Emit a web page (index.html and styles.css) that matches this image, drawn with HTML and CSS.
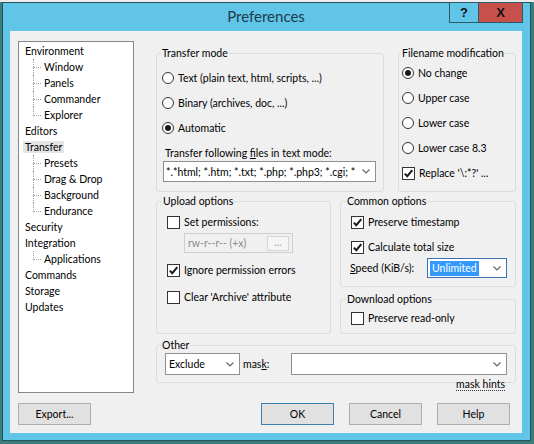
FILE: index.html
```html
<!DOCTYPE html>
<html lang="en">
<head>
    <meta charset="UTF-8">
    <meta name="viewport" content="width=device-width, initial-scale=1.0">
    <title>Preferences</title>
    <link rel="stylesheet" href="styles.css">
</head>
<body>
    <div class="window">
        <div class="titlebar">Preferences</div>
        <div class="caption-buttons">
            <span class="cap-btn cap-help">?</span>
            <span class="cap-btn cap-close">X</span>
        </div>
        <div class="client">
            <div class="main">
                <ul class="tree">
                    <li><span class="node">Environment</span>
                        <ul>
                            <li><span class="node">Window</span></li>
                            <li><span class="node">Panels</span></li>
                            <li><span class="node">Commander</span></li>
                            <li><span class="node">Explorer</span></li>
                        </ul>
                    </li>
                    <li><span class="node">Editors</span></li>
                    <li><span class="node selected">Transfer</span>
                        <ul>
                            <li><span class="node">Presets</span></li>
                            <li><span class="node">Drag &amp; Drop</span></li>
                            <li><span class="node">Background</span></li>
                            <li><span class="node">Endurance</span></li>
                        </ul>
                    </li>
                    <li><span class="node">Security</span></li>
                    <li><span class="node">Integration</span>
                        <ul>
                            <li><span class="node">Applications</span></li>
                        </ul>
                    </li>
                    <li><span class="node">Commands</span></li>
                    <li><span class="node">Storage</span></li>
                    <li><span class="node">Updates</span></li>
                </ul>

                <div class="panel">
                    <div class="row-top">
                        <fieldset class="group transfer-mode">
                            <legend>Transfer mode</legend>
                            <div class="opt"><span class="radio"></span>Text (plain text, html, scripts, ...)</div>
                            <div class="opt"><span class="radio"></span>Binary (archives, doc, ...)</div>
                            <div class="opt"><span class="radio on"></span>Automatic</div>
                            <div class="field-label">Transfer following <u>f</u>iles in text mode:</div>
                            <div class="combo text-masks">
                                <span class="combo-text">*.*html; *.htm; *.txt; *.php; *.php3; *.cgi; *</span>
                                <svg class="chevron" width="8" height="5" viewBox="0 0 8 5"><polyline points="0.5,0.5 4,4 7.5,0.5"/></svg>
                            </div>
                        </fieldset>
                        <fieldset class="group filename">
                            <legend>Filename modification</legend>
                            <div class="opt"><span class="radio on"></span>No change</div>
                            <div class="opt"><span class="radio"></span>Upper case</div>
                            <div class="opt"><span class="radio"></span>Lower case</div>
                            <div class="opt"><span class="radio"></span>Lower case 8.3</div>
                            <div class="opt"><span class="check"><svg viewBox="0 0 11 11"><polyline points="1.8,5.6 4.3,8.2 9.3,2.2"/></svg></span>Replace '\:*?' ...</div>
                        </fieldset>
                    </div>

                    <div class="row-mid">
                        <fieldset class="group upload">
                            <legend>Upload options</legend>
                            <div class="opt"><span class="check off"></span>Set permissions:</div>
                            <div class="perm">
                                <span>rw-r--r-- (+x)</span>
                                <span class="perm-btn">...</span>
                            </div>
                            <div class="opt ignore"><span class="check"><svg viewBox="0 0 11 11"><polyline points="1.8,5.6 4.3,8.2 9.3,2.2"/></svg></span>Ignore permission errors</div>
                            <div class="opt archive"><span class="check off"></span>Clear 'Archive' attribute</div>
                        </fieldset>
                        <div class="stack">
                            <fieldset class="group common">
                                <legend>Common options</legend>
                                <div class="opt"><span class="check"><svg viewBox="0 0 11 11"><polyline points="1.8,5.6 4.3,8.2 9.3,2.2"/></svg></span>Preserve timestamp</div>
                                <div class="opt"><span class="check"><svg viewBox="0 0 11 11"><polyline points="1.8,5.6 4.3,8.2 9.3,2.2"/></svg></span>Calculate total size</div>
                                <div class="speed-row">
                                    <span><u>S</u>peed (KiB/s):</span>
                                    <div class="combo speed">
                                        <span class="combo-text"><span class="sel-text">Unlimited</span></span>
                                        <svg class="chevron" width="8" height="5" viewBox="0 0 8 5"><polyline points="0.5,0.5 4,4 7.5,0.5"/></svg>
                                    </div>
                                </div>
                            </fieldset>
                            <fieldset class="group download">
                                <legend>Download options</legend>
                                <div class="opt"><span class="check off"></span>Preserve read-only</div>
                            </fieldset>
                        </div>
                    </div>

                    <fieldset class="group other">
                        <legend>Other</legend>
                        <div class="other-row">
                            <div class="combo exclude">
                                <span class="combo-text">Exclude</span>
                                <svg class="chevron" width="8" height="5" viewBox="0 0 8 5"><polyline points="0.5,0.5 4,4 7.5,0.5"/></svg>
                            </div>
                            <span class="mask-label">mas<u>k</u>:</span>
                            <div class="combo mask">
                                <span class="combo-text"></span>
                                <svg class="chevron" width="8" height="5" viewBox="0 0 8 5"><polyline points="0.5,0.5 4,4 7.5,0.5"/></svg>
                            </div>
                        </div>
                    </fieldset>
                    <div class="hints"><span>mask hints</span></div>
                </div>
            </div>

            <div class="buttons">
                <button class="btn">Export...</button>
                <button class="btn btn-ok">OK</button>
                <button class="btn">Cancel</button>
                <button class="btn">Help</button>
            </div>
        </div>
    </div>
</body>
</html>
```

FILE: styles.css
```css
* {
    box-sizing: border-box;
}
body {
    margin: 0;
    background: #3b7d7b linear-gradient(#ececec, #ececec) top / 100% 2px no-repeat;
    font-family: Lato, "Liberation Sans", sans-serif;
    font-size: 10.5px;
    color: #000;
}

/* window frame */
.window {
    position: relative;
    width: 529px;
    height: 439px;
    margin: 2px 0 0 2px;
    padding: 0 8px 7px 7px;
    background: #61c5e7;
    border: 1px solid #24525e;
}
.titlebar {
    height: 28px;
    line-height: 27px;
    text-align: center;
    font-size: 15px;
    color: #1d3b4d;
}
.caption-buttons {
    position: absolute;
    top: -1px;
    right: 7px;
    display: flex;
}
.cap-btn {
    height: 21px;
    display: flex;
    align-items: center;
    justify-content: center;
    border: 1px solid #2b5a69;
    font: bold 13px "Liberation Sans", sans-serif;
    color: #111;
}
.cap-help {
    width: 29px;
    border-right: none;
}
.cap-close {
    width: 45px;
    background: #c7504b;
}

.client {
    height: 402px;
    background: #f0f0f0;
    padding: 10px 6px 8px 8px;
    display: flex;
    flex-direction: column;
}
.main {
    display: flex;
    gap: 22px;
    height: 352px;
}

/* tree */
.tree {
    width: 116px;
    margin: 0;
    padding: 1px 0 0 4px;
    list-style: none;
    background: #fff;
    border: 1px solid #828790;
}
.tree ul {
    list-style: none;
    margin: 0;
    padding-left: 19px;
}
.tree li {
    position: relative;
}
.node {
    display: block;
    width: max-content;
    height: 16px;
    line-height: 16px;
    padding: 0 2px;
}
.node.selected {
    background: linear-gradient(transparent 2px, #e5e5e5 2px, #e5e5e5 14px, transparent 14px);
}
.tree ul li::before {
    content: '';
    position: absolute;
    left: -9px;
    top: 0;
    height: 16px;
    border-left: 1px dotted #a0a0a0;
}
.tree ul li:last-child::before {
    height: 9px;
}
.tree ul li::after {
    content: '';
    position: absolute;
    left: -9px;
    top: 8px;
    width: 8px;
    border-top: 1px dotted #a0a0a0;
}

/* options panel */
.panel {
    width: 360px;
    margin-top: 6px;
    display: flex;
    flex-direction: column;
}
.row-top {
    display: grid;
    grid-template-columns: 228px 118px;
    column-gap: 14px;
}
.row-mid {
    display: grid;
    grid-template-columns: 175px 176px;
    column-gap: 9px;
    margin-top: 3px;
}
.stack {
    display: flex;
    flex-direction: column;
    gap: 6px;
}
.group {
    margin: 0;
    min-width: 0;
    border: 1px solid #dcdcdc;
    border-radius: 3px;
}
.group legend {
    padding: 0 1px;
    line-height: 13px;
}
.transfer-mode {
    padding: 10px 7px 9px 5px;
}
.transfer-mode legend,
.filename legend {
    margin-left: -1px;
}
.filename {
    padding: 5px 4px 9px 3px;
}
.upload {
    padding: 6px 7px 0 10px;
}
.upload legend,
.common legend,
.download legend {
    margin-left: -5px;
}
.common {
    padding: 6px 8px 8px 10px;
}
.download {
    padding: 4px 8px 7px 10px;
}
.other {
    margin-top: 5px;
    padding: 1px 8px 7px 8px;
}
.other legend {
    margin-left: -4px;
}

.opt {
    display: flex;
    align-items: center;
    height: 16px;
    white-space: nowrap;
}
.opt + .opt,
.field-label {
    margin-top: 9px;
}
.field-label {
    height: 16px;
    line-height: 16px;
    padding-left: 3px;
}
.upload .ignore {
    margin-top: 9px;
}
.upload .archive {
    margin-top: 11px;
}

.radio {
    width: 12px;
    height: 12px;
    margin-right: 4px;
    border: 1px solid #333;
    border-radius: 50%;
    background: #fff;
    display: flex;
    align-items: center;
    justify-content: center;
}
.radio.on::after {
    content: '';
    width: 6px;
    height: 6px;
    border-radius: 50%;
    background: #1a1a1a;
}
.check {
    width: 13px;
    height: 13px;
    margin-right: 4px;
    border: 1px solid #333;
    background: #fff;
    display: flex;
}
.check svg {
    width: 11px;
    height: 11px;
}
.check polyline {
    fill: none;
    stroke: #1a1a1a;
    stroke-width: 2;
}

/* combo boxes */
.combo {
    display: flex;
    align-items: center;
    background: #fff;
    border: 1px solid #8f8f8f;
    padding: 0 5px 0 3px;
}
.combo-text {
    flex: 1;
    white-space: nowrap;
    overflow: hidden;
}
.chevron {
    flex: none;
    margin-left: 4px;
}
.chevron polyline {
    fill: none;
    stroke: #666;
    stroke-width: 1.2;
}
.text-masks {
    height: 21px;
    margin-left: 1px;
    padding-left: 2px;
}
.speed-row {
    display: flex;
    align-items: center;
    height: 20px;
    margin-top: 3px;
    margin-left: -1px;
}
.speed {
    width: 80px;
    height: 20px;
    margin-left: auto;
    border-color: #3d6fb5;
    padding-left: 2px;
}
.sel-text {
    display: inline-block;
    padding: 0 2px;
    line-height: 15px;
    background: #3399ff;
    color: #fff;
}

.perm {
    display: flex;
    align-items: center;
    width: 109px;
    height: 20px;
    margin: 3px 0 0 17px;
    padding: 0 3px 0 3px;
    border: 1px solid #cfcfcf;
    color: #8d8d8d;
}
.perm-btn {
    margin-left: auto;
    width: 22px;
    height: 15px;
    line-height: 11px;
    text-align: center;
    border: 1px solid #d5d5d5;
    background: #f5f5f5;
    color: #a8a8a8;
}

.other-row {
    display: flex;
    align-items: center;
    height: 22px;
}
.exclude {
    width: 75px;
    height: 22px;
}
.mask-label {
    margin-left: 3px;
}
.mask {
    width: 216px;
    height: 22px;
    margin-left: auto;
}
.hints {
    margin-top: -5px;
    padding-right: 11px;
    text-align: right;
    line-height: 13px;
}
.hints span {
    background: #f0f0f0;
    border-bottom: 1px dotted #333;
}

/* dialog buttons */
.buttons {
    display: flex;
    gap: 15px;
    margin-top: 10px;
    padding-right: 6px;
}
.btn {
    width: 73px;
    height: 22px;
    padding: 0;
    font: inherit;
    color: #000;
    background: #e1e1e1;
    border: 1px solid #adadad;
}
.btn-ok {
    margin-left: auto;
    border-color: #3c7fb1;
}
```
